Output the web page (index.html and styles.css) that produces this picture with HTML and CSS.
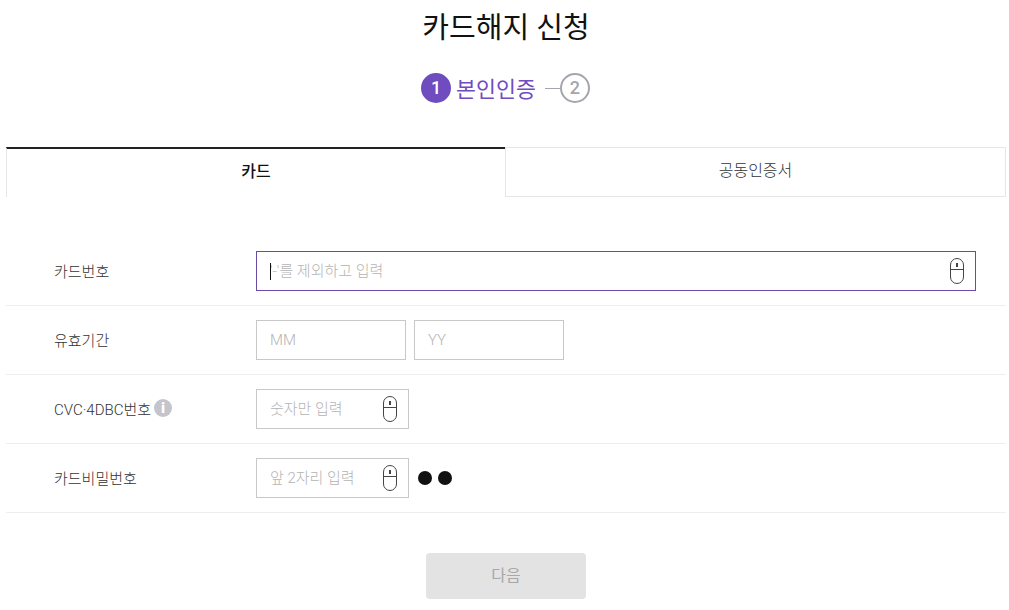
FILE: index.html
```html
<!DOCTYPE html>
<html lang="ko">
<head>
  <meta charset="UTF-8" />
  <meta name="viewport" content="width=device-width, initial-scale=1.0"/>
  <title>카드해지 신청</title>
  <link rel="stylesheet" href="styles.css">
</head>
<body>
  <svg class="hide">
    <symbol id="mouse" viewBox="0 0 16 26">
      <rect x="1.5" y="0.5" width="13" height="25" rx="6.5" fill="none" stroke="#444" stroke-width="1"/>
      <path d="M1.5 11.5H14.5" fill="none" stroke="#444" stroke-width="1"/>
      <rect x="7" y="5" width="2" height="4" fill="#444"/>
    </symbol>
  </svg>

  <div class="container">
    <div class="title">카드해지 신청</div>

    <div class="steps">
      <span class="step-num active">1</span>
      <span class="step-name">본인인증</span>
      <span class="step-line"></span>
      <span class="step-num">2</span>
    </div>

    <div class="tabs">
      <div class="tab active">카드</div>
      <div class="tab">공동인증서</div>
    </div>

    <div class="form">
      <div class="row">
        <div class="label">카드번호</div>
        <div class="field field-full focused">
          <span class="caret"></span>
          <input type="text" placeholder="'-'를 제외하고 입력">
          <svg class="mouse"><use href="#mouse"/></svg>
        </div>
      </div>
      <div class="row">
        <div class="label">유효기간</div>
        <div class="field field-date"><input type="text" placeholder="MM"></div>
        <div class="field field-date"><input type="text" placeholder="YY"></div>
      </div>
      <div class="row">
        <div class="label">CVC·4DBC번호<span class="info">i</span></div>
        <div class="field field-short">
          <input type="text" placeholder="숫자만 입력">
          <svg class="mouse"><use href="#mouse"/></svg>
        </div>
      </div>
      <div class="row">
        <div class="label">카드비밀번호</div>
        <div class="field field-short">
          <input type="text" placeholder="앞 2자리 입력">
          <svg class="mouse"><use href="#mouse"/></svg>
        </div>
        <span class="dot"></span>
        <span class="dot"></span>
      </div>
    </div>

    <div class="actions">
      <button disabled>다음</button>
    </div>
  </div>
</body>
</html>
```

FILE: styles.css
```css
body {
  margin: 0;
  font-family: Roboto, "Noto Sans CJK KR", sans-serif;
  color: #111;
  background-color: #fff;
}
.hide {
  display: none;
}
.container {
  width: 1000px;
  margin-left: 6px;
  height: 610px;
  overflow: hidden;
}
.title {
  font-size: 29px;
  line-height: 44px;
  margin-top: 6px;
  text-align: center;
}
.steps {
  display: flex;
  align-items: center;
  justify-content: center;
  margin-top: 23px;
  padding-right: 1px;
  height: 30px;
}
.step-num {
  width: 26px;
  height: 26px;
  border: 2px solid #a5a5ad;
  border-radius: 50%;
  color: #a5a5ad;
  font-size: 18px;
  font-weight: 500;
  line-height: 26px;
  text-align: center;
}
.step-num.active {
  background-color: #6f4dbf;
  border-color: #6f4dbf;
  color: #fff;
}
.step-name {
  margin-left: 5px;
  padding-bottom: 2px;
  font-size: 21.7px;
  color: #6f4dbf;
}
.step-line {
  width: 15px;
  height: 1px;
  margin-left: 9px;
  background-color: #a5a5ad;
}
.tabs {
  display: flex;
  margin-top: 44px;
}
.tab {
  flex: 1;
  height: 50px;
  box-sizing: border-box;
  border: 1px solid #e6e6e6;
  font-size: 16px;
  font-weight: 300;
  line-height: 46px;
  text-align: center;
  color: #333;
}
.tab.active {
  flex: none;
  width: 499px;
  border-top: 2px solid #222;
  border-right: none;
  border-bottom: none;
  font-weight: 500;
  color: #111;
}
.form {
  margin-top: 40px;
}
.row {
  display: flex;
  align-items: center;
  padding: 14px 0;
  border-bottom: 1px solid #eee;
}
.label {
  display: flex;
  align-items: center;
  width: 250px;
  padding-left: 48px;
  padding-bottom: 2px;
  box-sizing: border-box;
  font-size: 15px;
  font-weight: 300;
  color: #333;
}
.info {
  width: 18px;
  height: 18px;
  margin-left: 3px;
  border-radius: 50%;
  background-color: #c3c4cc;
  color: #fff;
  font-size: 15px;
  font-weight: 900;
  line-height: 18px;
  text-align: center;
}
.field {
  position: relative;
  display: flex;
  align-items: center;
  height: 40px;
  box-sizing: border-box;
  border: 1px solid #c8c8c8;
}
.field input {
  flex: 1;
  width: 100%;
  min-width: 0;
  padding: 0 0 0 13px;
  border: none;
  outline: none;
  background-color: transparent;
  font-family: inherit;
  font-size: 15px;
  font-weight: 300;
}
.field input::placeholder {
  color: #b4b4b4;
  opacity: 1;
}
.field-full {
  width: 720px;
}
.field-full.focused {
  border-color: #6b4ca5;
}
.field-date {
  width: 150px;
  margin-right: 8px;
}
.field-short {
  width: 153px;
}
.caret {
  position: absolute;
  left: 13px;
  top: 11px;
  width: 1px;
  height: 17px;
  background-color: #111;
}
.mouse {
  flex: none;
  width: 16px;
  height: 26px;
  margin-right: 10px;
}
.dot {
  width: 14px;
  height: 14px;
  border-radius: 50%;
  background-color: #111;
  margin-left: 6px;
}
.field + .dot {
  margin-left: 9px;
}
.actions {
  display: flex;
  justify-content: center;
  margin-top: 40px;
}
button {
  width: 160px;
  height: 46px;
  padding: 0 0 4px;
  border: none;
  border-radius: 4px;
  background-color: #e3e3e3;
  color: #a8a8a8;
  font-family: inherit;
  font-size: 16px;
}
```
